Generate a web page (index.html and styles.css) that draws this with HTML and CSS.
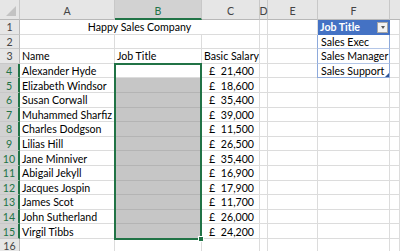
FILE: index.html
```html
<!DOCTYPE html>
<html lang="en">
<head>
<meta charset="utf-8">
<title>Happy Sales Company</title>
<link rel="stylesheet" href="styles.css">
</head>
<body>
<div class="wrap">
<div class="sheet">
  <!-- column headers -->
  <div class="ch corner"><span class="tri"></span></div>
  <div class="ch">A</div>
  <div class="ch ch-sel">B</div>
  <div class="ch">C</div>
  <div class="ch">D</div>
  <div class="ch">E</div>
  <div class="ch">F</div>
  <div class="ch ch-last"></div>

  <!-- row 1 -->
  <div class="rh">1</div>
  <div class="c span-title">Happy Sales Company</div>
  <div class="c"></div>
  <div class="c"></div>
  <div class="c tbl-head"><span>Job Title</span><span class="dd"><span class="dd-arrow"></span></span></div>
  <div class="c"></div>

  <!-- row 2 -->
  <div class="rh">2</div>
  <div class="c"></div><div class="c"></div><div class="c"></div><div class="c"></div><div class="c"></div>
  <div class="c tbl">Sales Exec</div>
  <div class="c"></div>

  <!-- row 3 -->
  <div class="rh">3</div>
  <div class="c">Name</div>
  <div class="c">Job Title</div>
  <div class="c">Basic Salary</div>
  <div class="c"></div><div class="c"></div>
  <div class="c tbl">Sales Manager</div>
  <div class="c"></div>

  <!-- rows 4-15 -->
  <div class="rh rh-sel">4</div>
  <div class="c">Alexander Hyde</div><div class="c active"></div>
  <div class="c money"><span>£</span><span>21,400</span></div>
  <div class="c"></div><div class="c"></div>
  <div class="c tbl tbl-end">Sales Support<span class="grip"></span></div>
  <div class="c"></div>

  <div class="rh rh-sel">5</div>
  <div class="c">Elizabeth Windsor</div><div class="c shade"></div>
  <div class="c money"><span>£</span><span>18,600</span></div>
  <div class="c"></div><div class="c"></div><div class="c"></div><div class="c"></div>

  <div class="rh rh-sel">6</div>
  <div class="c">Susan Corwall</div><div class="c shade"></div>
  <div class="c money"><span>£</span><span>35,400</span></div>
  <div class="c"></div><div class="c"></div><div class="c"></div><div class="c"></div>

  <div class="rh rh-sel">7</div>
  <div class="c">Muhammed Sharfiz</div><div class="c shade"></div>
  <div class="c money"><span>£</span><span>39,000</span></div>
  <div class="c"></div><div class="c"></div><div class="c"></div><div class="c"></div>

  <div class="rh rh-sel">8</div>
  <div class="c">Charles Dodgson</div><div class="c shade"></div>
  <div class="c money"><span>£</span><span>11,500</span></div>
  <div class="c"></div><div class="c"></div><div class="c"></div><div class="c"></div>

  <div class="rh rh-sel">9</div>
  <div class="c">Lilias Hill</div><div class="c shade"></div>
  <div class="c money"><span>£</span><span>26,500</span></div>
  <div class="c"></div><div class="c"></div><div class="c"></div><div class="c"></div>

  <div class="rh rh-sel">10</div>
  <div class="c">Jane Minniver</div><div class="c shade"></div>
  <div class="c money"><span>£</span><span>35,400</span></div>
  <div class="c"></div><div class="c"></div><div class="c"></div><div class="c"></div>

  <div class="rh rh-sel">11</div>
  <div class="c">Abigail Jekyll</div><div class="c shade"></div>
  <div class="c money"><span>£</span><span>16,900</span></div>
  <div class="c"></div><div class="c"></div><div class="c"></div><div class="c"></div>

  <div class="rh rh-sel">12</div>
  <div class="c">Jacques Jospin</div><div class="c shade"></div>
  <div class="c money"><span>£</span><span>17,900</span></div>
  <div class="c"></div><div class="c"></div><div class="c"></div><div class="c"></div>

  <div class="rh rh-sel">13</div>
  <div class="c">James Scot</div><div class="c shade"></div>
  <div class="c money"><span>£</span><span>11,700</span></div>
  <div class="c"></div><div class="c"></div><div class="c"></div><div class="c"></div>

  <div class="rh rh-sel">14</div>
  <div class="c">John Sutherland</div><div class="c shade"></div>
  <div class="c money"><span>£</span><span>26,000</span></div>
  <div class="c"></div><div class="c"></div><div class="c"></div><div class="c"></div>

  <div class="rh rh-sel">15</div>
  <div class="c">Virgil Tibbs</div><div class="c shade"></div>
  <div class="c money"><span>£</span><span>24,200</span></div>
  <div class="c"></div><div class="c"></div><div class="c"></div><div class="c"></div>

  <!-- row 16 -->
  <div class="rh">16</div>
  <div class="c"></div><div class="c"></div><div class="c"></div><div class="c"></div><div class="c"></div><div class="c"></div><div class="c"></div>
</div>

<!-- overlay layer sharing the sheet's tracks: selection outline over B4:B15 -->
<div class="overlay">
  <div class="selection"><span class="handle"></span></div>
</div>
</div>
</body>
</html>
```

FILE: styles.css
```css
html, body {
  margin: 0;
  padding: 0;
  background: #ffffff;
  overflow: hidden;
}

.wrap {
  display: grid;
  width: 400px;
  height: 251px;
  overflow: hidden;
}

.sheet,
.overlay {
  grid-area: 1 / 1;
  display: grid;
  grid-template-columns: 20px 95px 87px 58px 8px 50px 72px 10px;
  grid-template-rows: 20px repeat(16, 14.6px);
}

.sheet {
  font-family: Lato, "Open Sans", sans-serif;
  font-size: 10.6px;
  color: #000000;
}

.overlay {
  pointer-events: none;
}

/* column headers */
.ch {
  box-sizing: border-box;
  background: #e6e6e6;
  border-right: 1px solid #c8c8c8;
  border-bottom: 1px solid #b8b8b8;
  color: #444444;
  display: flex;
  align-items: center;
  justify-content: center;
  padding-top: 3px;
  font-size: 10.6px;
}

.ch-sel {
  background: #d2d2d2;
  color: #217346;
  border-bottom: 2px solid #217346;
}

.ch-last {
  border-right: none;
}

.corner {
  position: relative;
}

.tri {
  position: absolute;
  right: 3px;
  bottom: 3px;
  width: 0;
  height: 0;
  border-left: 10px solid transparent;
  border-bottom: 10px solid #c3c3c3;
}

/* row headers */
.rh {
  box-sizing: border-box;
  background: #e6e6e6;
  border-right: 1px solid #b8b8b8;
  border-bottom: 1px solid #c8c8c8;
  color: #444444;
  display: flex;
  align-items: center;
  justify-content: center;
  padding-top: 1px;
}

.rh-sel {
  background: #d2d2d2;
  color: #217346;
  border-right: 2px solid #217346;
}

/* ordinary cells */
.c {
  box-sizing: border-box;
  border-right: 1px solid #dcdcdc;
  border-bottom: 1px solid #dcdcdc;
  display: flex;
  align-items: center;
  padding: 1px 2px 0;
  white-space: nowrap;
  overflow: visible;
}

.span-title {
  grid-column: 2 / 5;
  justify-content: center;
}

.shade {
  background: #c6c6c6;
  border-bottom-color: #b4b4b4;
}

.money {
  justify-content: space-between;
  padding: 1px 5px 0 7px;
}

/* Job Title table */
.tbl-head {
  background: #4472c4;
  color: #ffffff;
  font-weight: bold;
  border-right: 1px solid #4472c4;
  border-bottom: 1px solid #4472c4;
  justify-content: space-between;
  padding-right: 1px;
}

.dd {
  box-sizing: border-box;
  width: 11px;
  height: 11px;
  background: #f2f2f2;
  border: 1px solid #a6a6a6;
  display: flex;
  align-items: center;
  justify-content: center;
}

.dd-arrow {
  width: 0;
  height: 0;
  border-left: 2.5px solid transparent;
  border-right: 2.5px solid transparent;
  border-top: 3px solid #595959;
}

.tbl {
  border-left: 1px solid #8eaadb;
  border-right: 1px solid #8eaadb;
  border-bottom: 1px solid #b4c6e7;
  margin-left: -1px;
  padding-left: 3px;
}

.tbl-end {
  position: relative;
  border-bottom: 1px solid #8eaadb;
}

.grip {
  position: absolute;
  right: 0;
  bottom: 0;
  width: 0;
  height: 0;
  border-left: 4px solid transparent;
  border-bottom: 4px solid #2f5597;
}

/* selection outline */
.selection {
  grid-column: 3 / 4;
  grid-row: 5 / 17;
  position: relative;
  box-sizing: border-box;
  margin: -1px 0 -1px -1px;
  border: 2px solid #217346;
}

.handle {
  position: absolute;
  right: -4px;
  bottom: -4px;
  width: 4px;
  height: 4px;
  background: #217346;
  border: 1px solid #ffffff;
}
```
